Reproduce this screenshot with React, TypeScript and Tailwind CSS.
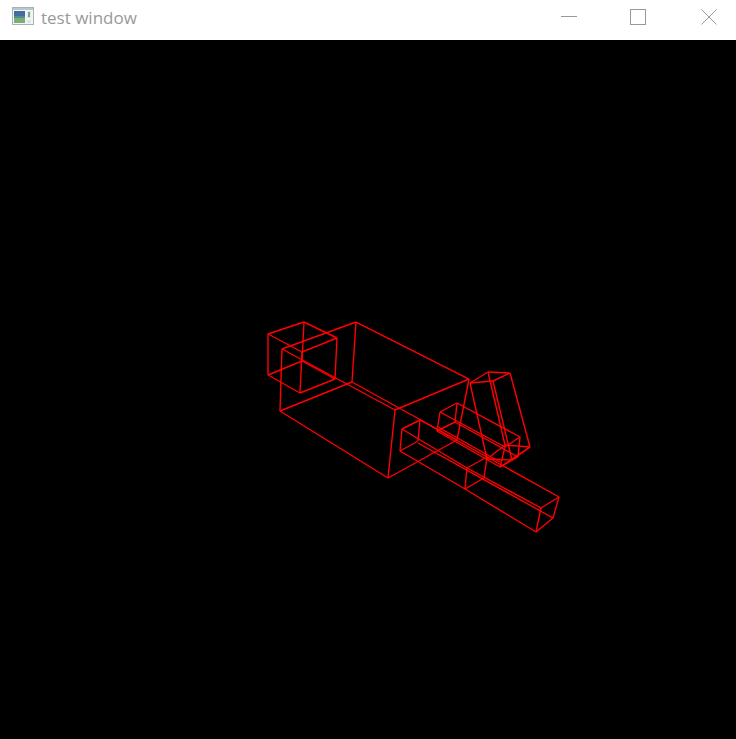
const segments: [number, number, number, number][] = [
  // small cube
  [268, 334, 304, 322], [304, 322, 337, 338], [337, 338, 302, 352], [302, 352, 268, 334],
  [268, 375, 300, 393], [300, 393, 335, 379], [335, 379, 302, 361], [302, 361, 268, 375],
  [268, 334, 268, 375], [304, 322, 302, 361], [337, 338, 335, 379], [302, 352, 300, 393],
  // main body
  [282, 349, 356, 322], [356, 322, 469, 379], [469, 379, 395, 410], [395, 410, 282, 349],
  [280, 411, 352, 382], [352, 382, 457, 440], [457, 440, 388, 478], [388, 478, 280, 411],
  [282, 349, 280, 411], [356, 322, 352, 382], [469, 379, 457, 440], [395, 410, 388, 478],
  // collar
  [402, 429, 420, 420], [420, 420, 487, 457], [487, 457, 467, 468], [467, 468, 402, 429],
  [400, 451, 418, 441], [465, 489, 400, 451],
  [402, 429, 400, 451], [420, 420, 418, 441], [487, 457, 484, 478], [484, 478, 465, 489], [467, 468, 465, 489],
  // barrel
  [467, 468, 541, 508], [418, 443, 553, 518], [465, 489, 536, 532], [487, 457, 559, 497],
  [541, 508, 559, 497], [559, 497, 553, 518], [553, 518, 536, 532], [536, 532, 541, 508],
  // upper box
  [440, 412, 457, 403], [457, 403, 520, 437], [520, 437, 505, 447], [505, 447, 440, 412],
  [437, 431, 455, 422], [455, 422, 518, 457], [518, 457, 500, 467], [500, 467, 437, 431],
  [440, 412, 437, 431], [457, 403, 455, 422], [520, 437, 518, 457], [505, 447, 500, 467],
  [438, 427, 500, 462],
  // handle
  [470, 383, 488, 372], [488, 372, 510, 373], [510, 373, 493, 381], [493, 381, 470, 383],
  [487, 459, 505, 445], [505, 445, 530, 447], [530, 447, 512, 460], [512, 460, 487, 459],
  [470, 383, 487, 459], [488, 372, 505, 445], [510, 373, 530, 447], [493, 381, 512, 460],
  [500, 467, 530, 447],
];

function AppIcon() {
  return (
    <svg width="22" height="18" viewBox="0 0 22 18" className="mt-[7px] shrink-0">
      <rect x="0.5" y="0.5" width="21" height="17" fill="#f4f6f6" stroke="#a9b4b8" />
      <rect x="1" y="1" width="20" height="2" fill="#b9c6cc" />
      <rect x="2" y="4" width="11" height="12" fill="#4f8f8f" />
      <rect x="2" y="4" width="11" height="5" fill="#3f6f9f" />
      <rect x="2" y="11" width="11" height="5" fill="#7fae72" />
      <rect x="15" y="4" width="4" height="7" fill="#dfe6e6" />
      <rect x="16" y="5" width="2" height="5" fill="#78a99a" />
      <rect x="15" y="13" width="4" height="3" fill="#dfe6e6" />
    </svg>
  );
}

export default function App() {
  return (
    <div className="flex h-[739px] w-[736px] flex-col overflow-hidden bg-black">
      {/* Title bar */}
      <div className="flex h-10 shrink-0 items-start bg-white pl-3">
        <AppIcon />
        <span className="ml-[7px] mt-[6px] font-['Open_Sans',sans-serif] text-[17px] leading-6 text-[#999999]">test window</span>
        <div className="ml-auto mr-[19px] mt-[9px] flex items-center">
          <svg width="16" height="16" viewBox="0 0 16 16" shapeRendering="crispEdges">
            <line x1="0" y1="7.5" x2="16" y2="7.5" stroke="#999999" />
          </svg>
          <svg width="16" height="16" viewBox="0 0 16 16" className="ml-[53px]" shapeRendering="crispEdges">
            <rect x="0.5" y="0.5" width="15" height="15" fill="none" stroke="#999999" />
          </svg>
          <svg width="16" height="16" viewBox="0 0 16 16" className="ml-[55px]">
            <path d="M0.5 0.5 L15.5 15.5 M15.5 0.5 L0.5 15.5" fill="none" stroke="#999999" />
          </svg>
        </div>
      </div>

      {/* GL viewport */}
      <svg viewBox="0 40 736 699" className="block h-[699px] w-[736px]">
        {segments.map(([x1, y1, x2, y2], i) => (
          <line key={i} x1={x1} y1={y1} x2={x2} y2={y2} stroke="#ff0000" strokeWidth="1.4" />
        ))}
      </svg>
    </div>
  );
}
